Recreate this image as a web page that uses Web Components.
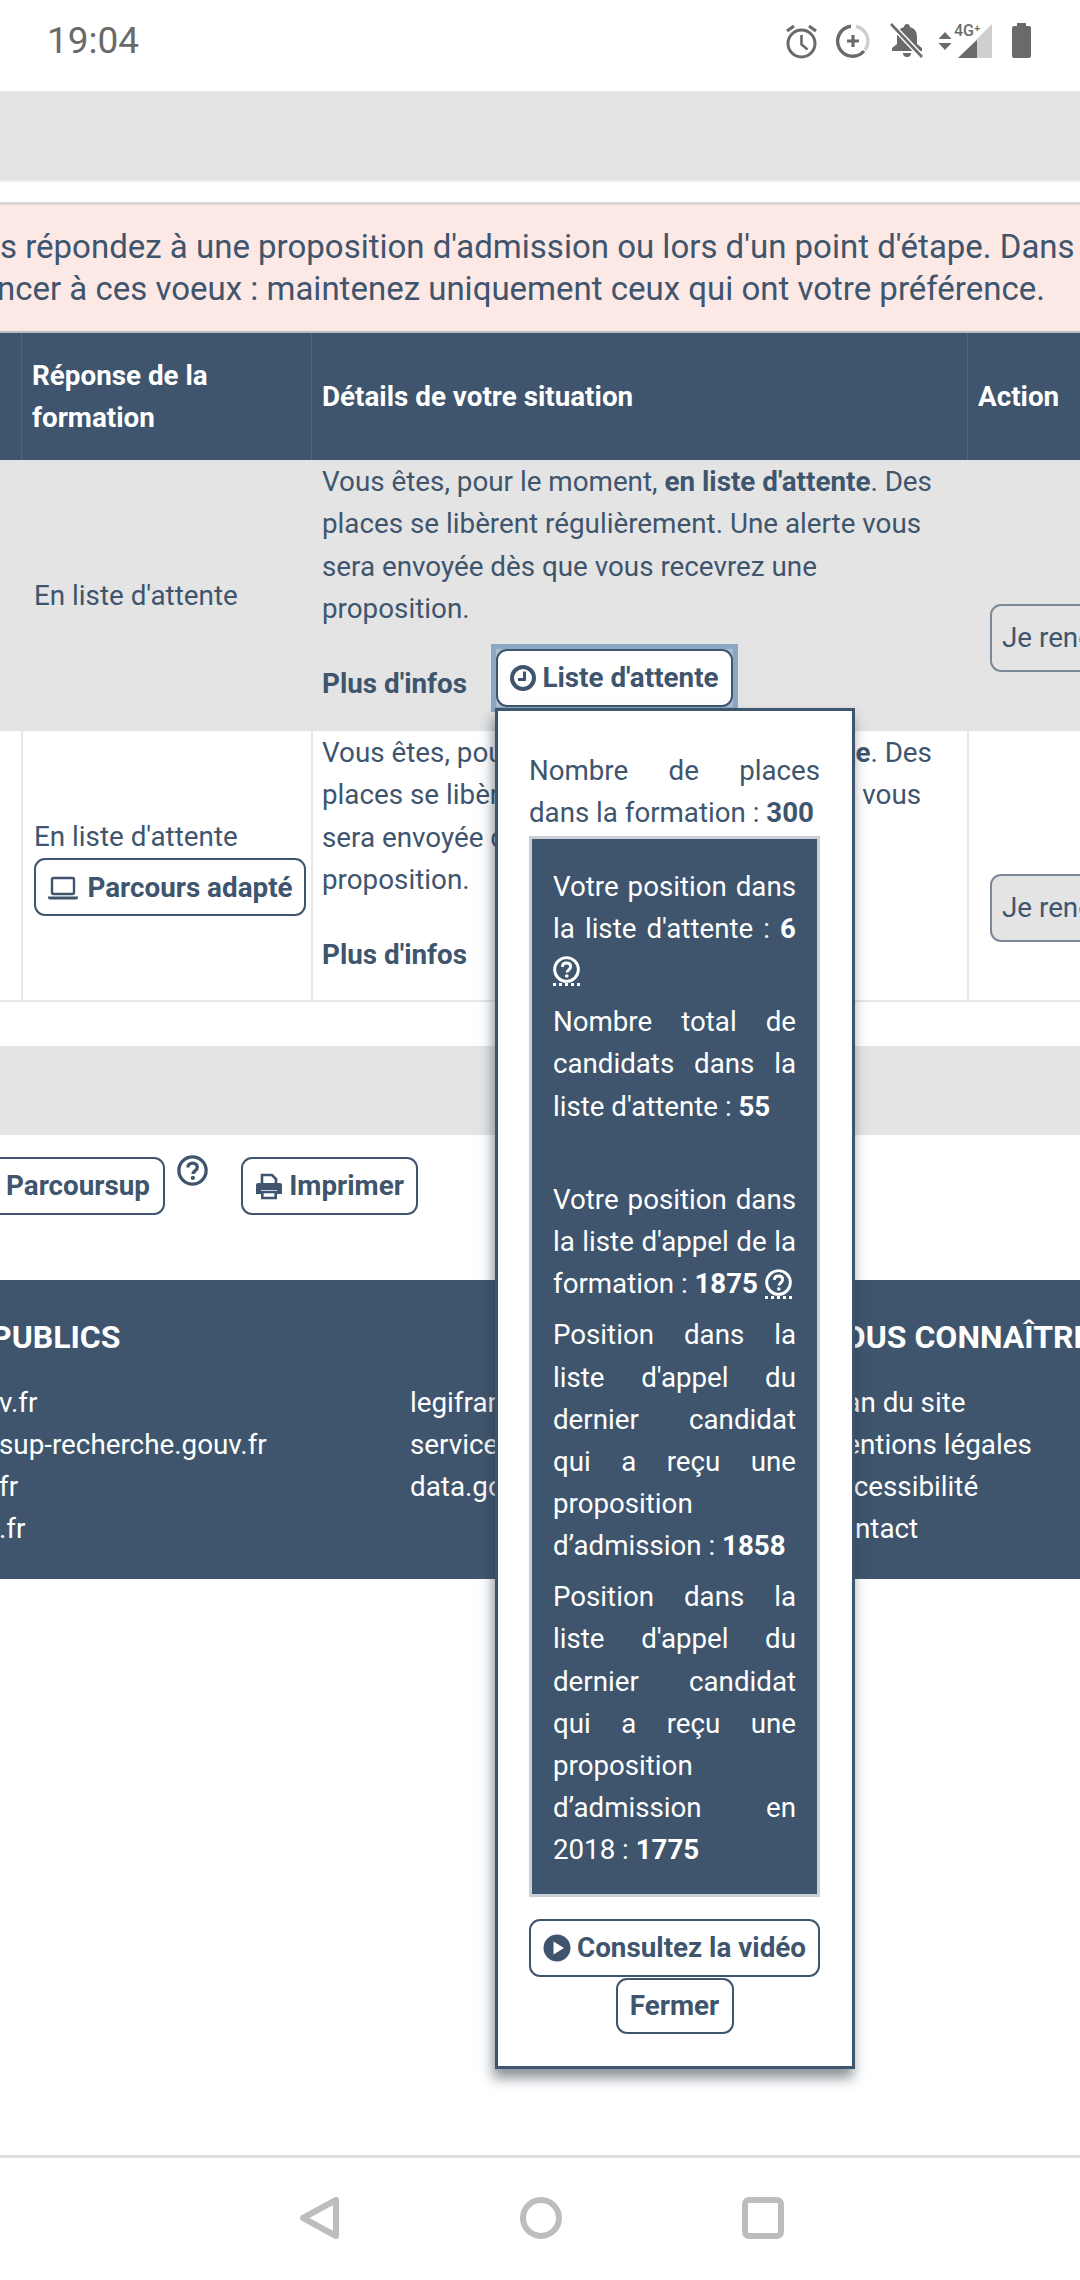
<!DOCTYPE html>
<html lang="fr">
<head>
<meta charset="utf-8">
<title>Parcoursup</title>
<style>
  html, body { margin: 0; padding: 0; }
  body {
    width: 1080px;
    height: 2280px;
    overflow: hidden;
    position: relative;
    display: flex;
    flex-direction: column;
    background: #fff;
    color: #3e556d;
    font: 27.8px/42px Roboto, "Liberation Sans", sans-serif;
  }
  main-page { flex: 1; }
  b { font-weight: 700; }
</style>
</head>
<body>
  <status-bar></status-bar>
  <main-page>
    <alert-banner>
      <div>s répondez à une proposition d'admission ou lors d'un point d'étape. Dans</div>
      <div>ncer à ces voeux : maintenez uniquement ceux qui ont votre préférence.</div>
    </alert-banner>
    <voeu-table>
      <voeu-row shaded>
        <span slot="status">En liste d'attente</span>
        <voeu-details><wait-btn focused></wait-btn></voeu-details>
        <ui-btn slot="action" muted>Je renonce</ui-btn>
      </voeu-row>
      <voeu-row>
        <span slot="status">En liste d'attente</span>
        <ui-btn slot="status-extra" icon="laptop" wide>Parcours adapté</ui-btn>
        <voeu-details><wait-btn></wait-btn></voeu-details>
        <ui-btn slot="action" muted>Je renonce</ui-btn>
      </voeu-row>
    </voeu-table>
    <action-bar></action-bar>
    <site-footer></site-footer>
  </main-page>
  <nav-bar></nav-bar>

  <wait-popup>
    <p class="lead">Nombre de places dans la formation : <b>300</b></p>
    <p slot="box">Votre position dans la liste d'attente : <b>6</b> <help-icon dotted></help-icon></p>
    <p slot="box">Nombre total de candidats dans la liste d'attente : <b>55</b></p>
    <p slot="box" class="sp">&nbsp;</p>
    <p slot="box">Votre position dans la liste d'appel de la formation : <b>1875</b> <help-icon dotted></help-icon></p>
    <p slot="box">Position dans la liste d'appel du dernier candidat qui a reçu une proposition d’admission : <b>1858</b></p>
    <p slot="box">Position dans la liste d'appel du dernier candidat qui a reçu une proposition d’admission en 2018 : <b>1775</b></p>
  </wait-popup>

<script>
const ICONS = {
  clock: `<svg viewBox="0 0 26 26" width="26" height="26"><circle cx="13" cy="13" r="11" fill="none" stroke="currentColor" stroke-width="4"/><path d="M14.500 6.500v8H8" fill="none" stroke="currentColor" stroke-width="3"/></svg>`,
  laptop: `<svg viewBox="0 0 32 26" width="32" height="26"><rect x="5" y="3" width="22" height="16" rx="1.500" fill="none" stroke="currentColor" stroke-width="2.400"/><path d="M1 21.500h30v1a2 2 0 0 1-2 2H3a2 2 0 0 1-2-2z" fill="currentColor"/></svg>`,
  print: `<svg viewBox="0 0 28 28" width="28" height="28"><path d="M7 11V3h10l4 4v4" fill="none" stroke="currentColor" stroke-width="2.600"/><path d="M3 11h22a2 2 0 0 1 2 2v9h-5v-4H6v4H1v-9a2 2 0 0 1 2-2z" fill="currentColor"/><path d="M7.300 20h13.400v6H7.300z" fill="none" stroke="currentColor" stroke-width="2.600"/></svg>`,
  play: `<svg viewBox="0 0 28 28" width="28" height="28"><circle cx="14" cy="14" r="13.500" fill="currentColor"/><path d="M10.500 7.500v13l10.500-6.500z" fill="#fff"/></svg>`,
};

class UiBtn extends HTMLElement {
  constructor() {
    super();
    this.attachShadow({ mode: "open" });
  }

  connectedCallback() {
    const icon = ICONS[this.getAttribute("icon")] || "";
    this.shadowRoot.innerHTML = `
      <style>
        :host {
          display: inline-flex;
          box-sizing: border-box;
          align-items: center;
          justify-content: center;
          gap: 6px;
          height: 58px;
          padding: 0 14px;
          background: #fff;
          color: #3e556d;
          border: 2.500px solid #3e556d;
          border-radius: 11px;
          font: 700 27.8px/42px Roboto, "Liberation Sans", sans-serif;
          white-space: nowrap;
        }
        :host([muted]) {
          background: #e4e4e4;
          border-color: #7b8997;
          color: #3e556d;
          font-weight: 400;
          justify-content: flex-start;
          height: 68px;
          width: 200px;
          padding-left: 10px;
        }
        :host([wide]) { width: 272px; padding: 2px 0 0; gap: 8px; }
        svg { display: block; flex: none; }
      </style>
      ${icon}<slot></slot>
    `;
  }
}

class HelpIcon extends HTMLElement {
  constructor() {
    super();
    this.attachShadow({ mode: "open" });
  }

  connectedCallback() {
    this.shadowRoot.innerHTML = `
      <style>
        :host {
          display: inline-block;
          box-sizing: border-box;
          width: 27px;
          height: 30px;
          vertical-align: -6px;
          color: inherit;
        }
        :host([dotted]) { border-bottom: 3px dotted currentColor; }
        svg { display: block; width: 100%; }
      </style>
      <svg viewBox="0 0 28 28">
        <circle cx="14" cy="14" r="12.300" fill="none" stroke="currentColor" stroke-width="3"/>
        <path d="M9.800 11.300c0-2.500 1.800-4 4.300-4s4.200 1.500 4.200 3.700c0 3.300-3.800 3.300-3.800 6.200" fill="none" stroke="currentColor" stroke-width="3"/>
        <circle cx="14.300" cy="20.700" r="1.900" fill="currentColor"/>
      </svg>
    `;
  }
}

class StatusBar extends HTMLElement {
  constructor() {
    super();
    this.attachShadow({ mode: "open" });
  }

  connectedCallback() {
    this.shadowRoot.innerHTML = `
      <style>
        :host {
          display: flex;
          align-items: center;
          height: 91px;
          padding: 0 49px 10px 47px;
          box-sizing: border-box;
          color: #6a6a6a;
          background: #fff;
          font: 400 37px/42px Roboto, sans-serif;
        }
        .icons { margin-left: auto; display: flex; align-items: center; }
        svg { display: block; overflow: visible; }
      </style>
      <span>19:04</span>
      <div class="icons">
        <svg width="33" height="38" viewBox="0 0 33 38">
          <circle cx="16.500" cy="21.500" r="13.500" fill="none" stroke="#6a6a6a" stroke-width="3"/>
          <path d="M16.500 13v9.500l6 5" fill="none" stroke="#6a6a6a" stroke-width="2.600"/>
          <path d="M2 9l7-5M31 9l-7-5" stroke="#6a6a6a" stroke-width="3.200"/>
        </svg>
        <svg width="34" height="34" viewBox="0 0 34 34" style="margin-left:18px">
          <path d="M20 2.500A15 15 0 0 1 32 17 a15 15 0 0 1-3 9" fill="none" stroke="#cfcfcf" stroke-width="3.400"/>
          <path d="M28 27A15 15 0 1 1 15 2.300" fill="none" stroke="#6a6a6a" stroke-width="3.400"/>
          <path d="M17 11v12M11 17h12" stroke="#6a6a6a" stroke-width="3.200"/>
        </svg>
        <svg width="34" height="35" viewBox="0 0 34 35" style="margin-left:20px">
          <path d="M17 1c2 0 3 1.500 3 3 5 1.500 7 5 7 10v7l5 4v3H2v-3l5-4v-7c0-5 2-8.500 7-10 0-1.500 1-3 3-3z" fill="#6a6a6a"/>
          <path d="M13 30h8a4 4 0 0 1-8 0z" fill="#6a6a6a"/>
          <path d="M1 1l31 33" stroke="#fff" stroke-width="5.500"/>
          <path d="M1 1l31 33" stroke="#6a6a6a" stroke-width="2.600"/>
        </svg>
        <svg width="54" height="36" viewBox="0 0 54 36" style="margin-left:14px">
          <path d="M7 9l6.500 7H.5zM7 27l6.500-7H.5z" fill="#6a6a6a"/>
          <path d="M54 1v34H20z" fill="#cfcfcf"/>
          <path d="M39 17v18H20z" fill="#6a6a6a"/>
          <text x="16" y="13" font-family="Roboto" font-size="16" font-weight="500" fill="#6a6a6a">4G⁺</text>
        </svg>
        <svg width="19" height="35" viewBox="0 0 19 35" style="margin-left:20px">
          <path d="M5 0h9v3h3a2 2 0 0 1 2 2v28a2 2 0 0 1-2 2H2a2 2 0 0 1-2-2V5a2 2 0 0 1 2-2h3z" fill="#6a6a6a"/>
        </svg>
      </div>
    `;
  }
}

class AlertBanner extends HTMLElement {
  constructor() {
    super();
    this.attachShadow({ mode: "open" });
  }

  connectedCallback() {
    this.shadowRoot.innerHTML = `
      <style>
        :host { display: block; }
        .band { height: 89px; background: #e4e4e4; border-bottom: 2px solid #eee; }
        .gap { height: 20px; }
        .alert {
          box-sizing: border-box;
          height: 131px;
          background: #fce8e5;
          border-top: 3px solid #d9d7d5;
          border-bottom: 2px solid #b4bcc4;
          padding-top: 21px;
          font-size: 33px;
          line-height: 42px;
          white-space: nowrap;
          overflow: hidden;
          color: #3e556d;
        }
        ::slotted(div) { margin-left: 0; }
        ::slotted(div:last-child) { margin-left: -3px; }
      </style>
      <div class="band"></div>
      <div class="gap"></div>
      <div class="alert"><slot></slot></div>
    `;
  }
}

class VoeuTable extends HTMLElement {
  constructor() {
    super();
    this.attachShadow({ mode: "open" });
  }

  connectedCallback() {
    this.shadowRoot.innerHTML = `
      <style>
        :host { display: block; overflow: hidden; }
        .head {
          display: grid;
          grid-template-columns: 21px 290px 656px 1fr;
          height: 127px;
          background: #3e556d;
          color: #fff;
          font-weight: 700;
        }
        .head div {
          display: flex;
          align-items: center;
          border-left: 1px solid #51677d;
          padding-left: 10px;
        }
        .tail { height: 44px; }
      </style>
      <div class="head">
        <div style="border:0"></div>
        <div>Réponse de la<br>formation</div>
        <div>Détails de votre situation</div>
        <div>Action</div>
      </div>
      <slot></slot>
      <div class="tail"></div>
    `;
  }
}

class VoeuRow extends HTMLElement {
  constructor() {
    super();
    this.attachShadow({ mode: "open" });
  }

  connectedCallback() {
    this.shadowRoot.innerHTML = `
      <style>
        :host {
          display: grid;
          grid-template-columns: 21px 290px 656px 1fr;
          height: 271px;
          box-sizing: border-box;
          border-bottom: 2px solid #e8e8e8;
          color: #3e556d;
          white-space: nowrap;
        }
        :host([shaded]) { background: #e4e4e4; border-bottom: 0; }
        .cell { border-left: 2px solid #e8e8e8; min-width: 0; }
        :host([shaded]) .cell { border-left-color: #e4e4e4; }
        .status {
          display: flex;
          flex-direction: column;
          justify-content: center;
          align-items: flex-start;
          padding-left: 11px;
        }
        .details { padding-left: 9px; }
        .action {
          display: flex;
          align-items: center;
          padding-left: 21px;
          padding-top: 84px;
          box-sizing: border-box;
        }
      </style>
      <div></div>
      <div class="cell status">
        <slot name="status"></slot>
        <slot name="status-extra"></slot>
      </div>
      <div class="cell details"><slot></slot></div>
      <div class="cell action"><slot name="action"></slot></div>
    `;
  }
}

class VoeuDetails extends HTMLElement {
  constructor() {
    super();
    this.attachShadow({ mode: "open" });
  }

  connectedCallback() {
    this.shadowRoot.innerHTML = `
      <style>
        :host { display: block; white-space: normal; padding-top: 1px; }
        .text { width: 625px; line-height: 42.4px; }
        .more {
          display: flex;
          align-items: flex-end;
          margin-top: 18.500px;
        }
        b { font-weight: 700; }
        .label { font-weight: 700; width: 174px; margin-bottom: 2px; }
      </style>
      <div class="text">Vous êtes, pour le moment, <b>en liste d'attente</b>. Des places se libèrent régulièrement. Une alerte vous sera envoyée dès que vous recevrez une proposition.</div>
      <div class="more"><span class="label">Plus d'infos</span><slot></slot></div>
    `;
  }
}

class WaitBtn extends HTMLElement {
  constructor() {
    super();
    this.attachShadow({ mode: "open" });
  }

  connectedCallback() {
    const focused = this.hasAttribute("focused") ? "focused" : "";
    this.shadowRoot.innerHTML = `
      <style>
        :host { display: block; }
        .wrap { display: flex; width: 237px; }
        .focused { background: #a9bfd4; outline: 5px solid #8aa8c4; }
        ui-btn { width: 237px; padding: 0; }
      </style>
      <div class="wrap ${focused}"><ui-btn icon="clock">Liste d'attente</ui-btn></div>
    `;
  }
}

class ActionBar extends HTMLElement {
  constructor() {
    super();
    this.attachShadow({ mode: "open" });
  }

  connectedCallback() {
    this.shadowRoot.innerHTML = `
      <style>
        :host { display: block; }
        .band { height: 89px; background: #e4e4e4; }
        .row {
          height: 145px;
          box-sizing: border-box;
          padding-top: 22px;
          display: flex;
          align-items: flex-start;
          color: #3e556d;
          overflow: hidden;
        }
        .first {
          margin-left: -20px;
          width: 185px;
          flex: none;
          justify-content: flex-end;
          padding-right: 13px;
        }
        help-icon { margin: -2px 0 0 12px; width: 31px; height: 31px; flex: none; }
        .print { margin-left: 33px; width: 177px; padding: 0; flex: none; }
      </style>
      <div class="band"></div>
      <div class="row">
        <ui-btn class="first">Parcoursup</ui-btn>
        <help-icon></help-icon>
        <ui-btn class="print" icon="print">Imprimer</ui-btn>
      </div>
    `;
  }
}

class SiteFooter extends HTMLElement {
  constructor() {
    super();
    this.attachShadow({ mode: "open" });
  }

  connectedCallback() {
    this.shadowRoot.innerHTML = `
      <style>
        :host {
          display: grid;
          grid-template-columns: 410px 411px 1fr;
          box-sizing: border-box;
          height: 299px;
          padding-top: 36px;
          background: #3e556d;
          color: #fff;
          overflow: hidden;
          white-space: nowrap;
        }
        h3 {
          margin: 0 0 24px;
          height: 42px;
          font-size: 32px;
          line-height: 42px;
          font-weight: 700;
        }
        .l h3 { margin-left: -9px; }
        .l div { margin-left: -1px; }
      </style>
      <div class="l">
        <h3>PUBLICS</h3>
        <div>v.fr</div>
        <div>sup-recherche.gouv.fr</div>
        <div>fr</div>
        <div>.fr</div>
      </div>
      <div>
        <h3>&nbsp;</h3>
        <div>legifrance.gouv.fr</div>
        <div>service-public.fr</div>
        <div>data.gouv.fr</div>
      </div>
      <div>
        <h3>NOUS CONNAÎTRE</h3>
        <div>Plan du site</div>
        <div>Mentions légales</div>
        <div>Accessibilité</div>
        <div>Contact</div>
      </div>
    `;
  }
}

class WaitPopup extends HTMLElement {
  constructor() {
    super();
    this.attachShadow({ mode: "open" });
  }

  connectedCallback() {
    this.shadowRoot.innerHTML = `
      <style>
        :host {
          position: absolute;
          left: 495px;
          top: 708px;
          width: 360px;
          height: 1361px;
          box-sizing: border-box;
          background: #fff;
          border: 3px solid #3e556d;
          box-shadow: -2px 9px 12px rgba(40, 55, 70, 0.55);
          padding: 39px 32px 0 31px;
          text-align: justify;
          color: #3e556d;
          font-size: 27.7px;
          line-height: 42.15px;
        }
        .box {
          box-sizing: border-box;
          height: 1061px;
          margin-top: 2px;
          background: #3e556d;
          border: 3px solid #c9cfd5;
          padding: 26.500px 21px 0;
          color: #fff;
        }
        ::slotted(p) { margin: 0 0 9px; }
        ::slotted(p.lead), ::slotted(p.sp) { margin: 0; }
        .buttons {
          display: flex;
          flex-direction: column;
          align-items: center;
          margin-top: 22px;
          text-align: left;
        }
        .video { width: 291px; padding: 0; }
        .close { width: 118px; height: 56px; margin-top: 1px; padding: 0; }
      </style>
      <slot></slot>
      <div class="box"><slot name="box"></slot></div>
      <div class="buttons">
        <ui-btn class="video" icon="play">Consultez la vidéo</ui-btn>
        <ui-btn class="close">Fermer</ui-btn>
      </div>
    `;
  }
}

class NavBar extends HTMLElement {
  constructor() {
    super();
    this.attachShadow({ mode: "open" });
  }

  connectedCallback() {
    this.shadowRoot.innerHTML = `
      <style>
        :host {
          display: flex;
          height: 125px;
          box-sizing: border-box;
          border-top: 3px solid #e0e0e0;
          background: #fff;
          align-items: center;
          justify-content: center;
          gap: 180px;
          padding: 0 0 2px 2px;
        }
        svg { display: block; }
      </style>
      <svg width="42" height="44" viewBox="0 0 42 44">
        <path d="M38 4v36L5 22z" fill="none" stroke="#bdbdbd" stroke-width="6" stroke-linejoin="round"/>
      </svg>
      <svg width="42" height="42" viewBox="0 0 42 42">
        <circle cx="21" cy="21" r="18" fill="none" stroke="#bdbdbd" stroke-width="6"/>
      </svg>
      <svg width="42" height="42" viewBox="0 0 42 42">
        <rect x="3" y="3" width="36" height="36" rx="4" fill="none" stroke="#bdbdbd" stroke-width="6"/>
      </svg>
    `;
  }
}

class MainPage extends HTMLElement {
  constructor() {
    super();
    this.attachShadow({ mode: "open" });
  }

  connectedCallback() {
    this.shadowRoot.innerHTML = `
      <style>:host { display: block; }</style>
      <slot></slot>
    `;
  }
}

customElements.define("ui-btn", UiBtn);
customElements.define("help-icon", HelpIcon);
customElements.define("status-bar", StatusBar);
customElements.define("alert-banner", AlertBanner);
customElements.define("voeu-table", VoeuTable);
customElements.define("voeu-row", VoeuRow);
customElements.define("voeu-details", VoeuDetails);
customElements.define("wait-btn", WaitBtn);
customElements.define("action-bar", ActionBar);
customElements.define("site-footer", SiteFooter);
customElements.define("wait-popup", WaitPopup);
customElements.define("nav-bar", NavBar);
customElements.define("main-page", MainPage);
</script>
</body>
</html>
